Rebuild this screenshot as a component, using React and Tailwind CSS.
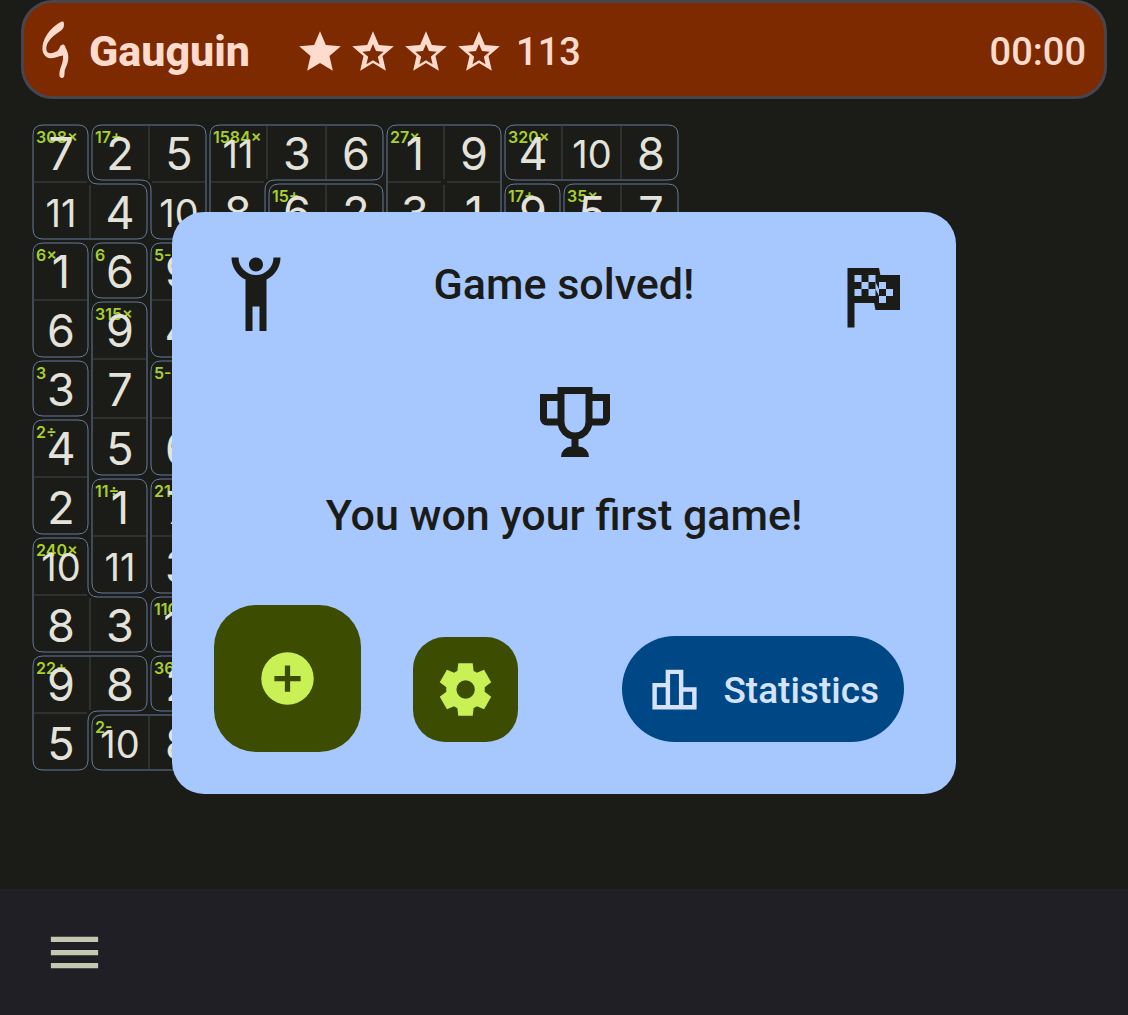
const CELL = 59;
const INSET = 2;
const RADIUS = 10;

const VALUES = [
  [7, 2, 5, 11, 3, 6, 1, 9, 4, 10, 8],
  [11, 4, 10, 8, 6, 2, 3, 1, 9, 5, 7],
  [1, 6, 9],
  [6, 9, 4],
  [3, 7],
  [4, 5, 6],
  [2, 1, 7],
  [10, 11, 3],
  [8, 3, 11],
  [9, 8, 2],
  [5, 10, 8],
];

const CAGES = [
  "ABBCCCDDEEE",
  "AABCFFDDGHH",
  "IJK",
  "ILK",
  "MLN",
  "OLN",
  "OPQ",
  "RPQ",
  "RRS",
  "TTU",
  "TVV",
];

const LABELS = {
  A: "308×", B: "17+", C: "1584×", D: "27×", E: "320×", F: "15+", G: "17+", H: "35×",
  I: "6×", J: "6", K: "5-", L: "315×", M: "3", N: "5-", O: "2÷", P: "11÷",
  Q: "21+", R: "240×", S: "110×", T: "22+", U: "36×", V: "2-",
};

const cageAt = (r, c) => (CAGES[r] && CAGES[r][c]) || "";

function buildLines() {
  const outline = [];
  const inner = [];
  const labelled = {};
  CAGES.forEach((row, r) => {
    [...row].forEach((id, c) => {
      if (!labelled[id]) labelled[id] = `${r}-${c}`;
      const x = c * CELL;
      const y = r * CELL;
      const same = (dr, dc) => cageAt(r + dr, c + dc) === id;
      const lo = INSET;
      const hi = CELL - INSET;
      // distance from the cell edge at which a side's straight run ends
      const gap = (perpendicular, diagonal) => {
        if (!perpendicular) return INSET + RADIUS;
        return diagonal ? RADIUS - INSET : 0;
      };
      [-1, 1].forEach((s) => {
        const edge = s < 0 ? lo : hi;
        if (!same(s, 0)) {
          const a = gap(same(0, -1), same(s, -1));
          const b = CELL - gap(same(0, 1), same(s, 1));
          outline.push(`M${x + a} ${y + edge}H${x + b}`);
        }
        if (!same(0, s)) {
          const a = gap(same(-1, 0), same(-1, s));
          const b = CELL - gap(same(1, 0), same(1, s));
          outline.push(`M${x + edge} ${y + a}V${y + b}`);
        }
        [-1, 1].forEach((t) => {
          const ex = x + (t < 0 ? lo : hi);
          const ey = y + edge;
          if (!same(s, 0) && !same(0, t)) {
            outline.push(`M${ex} ${ey - s * RADIUS}Q${ex} ${ey} ${ex - t * RADIUS} ${ey}`);
          }
          if (same(s, 0) && same(0, t) && !same(s, t)) {
            outline.push(`M${ex} ${ey + s * RADIUS}Q${ex} ${ey} ${ex + t * RADIUS} ${ey}`);
          }
        });
      });
      if (same(0, 1)) inner.push(`M${x + CELL} ${y + 3}V${y + 56}`);
      if (same(1, 0)) inner.push(`M${x + 3} ${y + CELL}H${x + 56}`);
    });
  });
  return { outline: outline.join(""), inner: inner.join(""), labelled };
}

const LINES = buildLines();

function Board() {
  return (
    <div className="relative w-max">
      <svg className="absolute inset-0 h-full w-full" fill="none" aria-hidden="true">
        <path d={LINES.inner} stroke="#43474e" strokeWidth="1" />
        <path d={LINES.outline} stroke="#647b9a" strokeWidth="1" />
      </svg>
      <div className="relative grid grid-cols-[repeat(11,59px)] auto-rows-[59px] font-['Inter',sans-serif]">
        {VALUES.map((row, r) =>
          Array.from({ length: 11 }, (_, c) => {
            const value = row[c];
            const id = cageAt(r, c);
            return (
              <div key={`${r}-${c}`} className="relative flex items-center justify-center pt-0.5 pl-px">
                {LINES.labelled[id] === `${r}-${c}` && (
                  <span className="absolute left-[5px] top-1 text-base leading-5 font-semibold text-[#a8d02c]">
                    {LABELS[id]}
                  </span>
                )}
                <span
                  className={
                    value > 9
                      ? "relative text-[38px] leading-none text-[#e4e3db]"
                      : "relative text-[45px] leading-none text-[#e4e3db]"
                  }
                >
                  {value}
                </span>
              </div>
            );
          })
        )}
      </div>
    </div>
  );
}

function Star({ filled }) {
  return (
    <svg className="size-[50px]" viewBox="0 -960 960 960" fill="currentColor" aria-hidden="true">
      <path
        d={
          filled
            ? "m233-120 65-281L80-590l288-25 112-265 112 265 288 25-218 189 65 281-247-149-247 149Z"
            : "m354-247 126-76 126 77-33-144 111-96-146-13-58-136-58 135-146 13 111 97-33 143ZM233-120l65-281L80-590l288-25 112-265 112 265 288 25-218 189 65 281-247-149-247 149Z"
        }
      />
    </svg>
  );
}

function Icon({ d, className }) {
  return (
    <svg className={className} viewBox="0 0 24 24" fill="currentColor" fillRule="evenodd" aria-hidden="true">
      <path d={d} />
    </svg>
  );
}

const HUMAN =
  "M5,1C5,3.7 6.56,6.16 9,7.32V22H11V15H13V22H15V7.31C17.44,6.16 19,3.7 19,1H17A5,5 0 0,1 12,6A5,5 0 0,1 7,1M12,1C10.89,1 10,1.89 10,3C10,4.11 10.89,5 12,5C13.11,5 14,4.11 14,3C14,1.89 13.11,1 12,1Z";
const FLAG =
  "M14.4,6H20V16H13L12.6,14H7V21H5V4H14L14.4,6M14,14H16V12H18V10H16V8H14V10L13,8V6H11V8H9V6H7V8H9V10H7V12H9V10H11V12H13V10L14,12V14M11,10V8H13V10H11M14,10H16V12H14V10Z";
const TROPHY =
  "M7 2H17V4H22V11A2 2 0 0 1 20 13H16.9A5 5 0 0 1 13 16.9V19A3 3 0 0 1 16 22H8A3 3 0 0 1 11 19V16.9A5 5 0 0 1 7.1 13H4A2 2 0 0 1 2 11V4H7ZM9 4V12A3 3 0 0 0 15 12V4ZM4 6V11H7V6ZM17 6V11H20V6Z";
const PLUS = "M12 2a10 10 0 1 0 0 20a10 10 0 1 0 0-20ZM11 7h2v4h4v2h-4v4h-2v-4H7v-2h4Z";
const CHART =
  "M16,11V3H8v6H2v12h20V11H16z M10,5h4v14h-4V5z M4,11h4v8H4V11z M20,19h-4v-6h4V19z";
const MENU = "M3 18h18v-2H3v2zm0-5h18v-2H3v2zm0-7v2h18V6H3z";
const LOGO =
  "M25 0.5C26.500 0 27 1 27 4C27 7 25 9 22 11C14 16 8 23 9.500 29.500C11 34 16 32 19.500 30.500C23 29 22 24 26 23.500C28 23.500 28 26 29.500 28.500C33 36 31 42 28 48.500C27 51 28.500 56 25.500 57C22 57.500 22 53 23 49C24 45 26.500 41 26 34.500C18 36 12 40 7.500 34C2.500 28 7 15 15 7.500C19 4 22 1.500 25 0.500Z";

export default function App() {
  return (
    <div className="relative flex min-h-screen flex-col bg-[#1b1c17] font-['Roboto',sans-serif]">
      <header className="mx-[21px] flex h-[99px] items-center rounded-[32px] border-3 border-[#49454f] bg-[#7d2a00] pt-0.5 pr-[18px] pl-[13px] text-[#ffdbce]">
        <svg className="mr-4 h-[60px] w-9" viewBox="0 0 36 60" fill="currentColor" aria-hidden="true">
          <path d={LOGO} />
        </svg>
        <h1 className="text-[43px] leading-[52px] font-extrabold">Gauguin</h1>
        <div className="ml-[45px] flex gap-[3px] pt-0.5" role="img" aria-label="Difficulty 1 of 4">
          <Star filled />
          <Star />
          <Star />
          <Star />
        </div>
        <span className="ml-3 pt-0.5 text-[38px] leading-[52px] font-medium">113</span>
        <time className="ml-auto pt-0.5 text-[38px] leading-[52px] font-medium">00:00</time>
      </header>

      <main className="flex-1 pt-6 pl-[31px]">
        <Board />
      </main>

      <nav className="flex h-[126px] items-center bg-[#211f26] px-[43px]">
        <button type="button" aria-label="Menu" className="text-[#c5c8b0]">
          <Icon d={MENU} className="size-[63px]" />
        </button>
      </nav>

      <div className="absolute inset-0 flex items-center justify-center px-[172px] pb-[9px]">
        <section
          role="dialog"
          aria-labelledby="dialog-title"
          className="flex w-full flex-col rounded-[32px] bg-[#a7c7ff] p-[42px] text-[#1b1c18]"
        >
          <div className="flex justify-between">
            <Icon d={HUMAN} className="size-[84px]" />
            <h2 id="dialog-title" className="text-[43px] leading-[60px] font-medium">Game solved!</h2>
            <Icon d={FLAG} className="size-[84px]" />
          </div>
          <Icon d={TROPHY} className="mt-[42px] ml-[21px] size-[84px] self-center" />
          <p className="mt-[21px] text-center text-[43px] leading-[60px] font-medium">You won your first game!</p>
          <div className="mt-[60px] flex items-end pr-[10px]">
            <button type="button" aria-label="New game" className="flex size-[147px] items-center justify-center rounded-[42px] bg-[#3c4c00] text-[#c9f156]">
              <Icon d={PLUS} className="size-[63px]" />
            </button>
            <button type="button" aria-label="Settings" className="mb-[10px] ml-[52px] flex size-[105px] items-center justify-center rounded-[32px] bg-[#3c4c00] text-[#c9f156]">
              <svg className="size-[63px]" viewBox="0 -960 960 960" fill="currentColor" aria-hidden="true">
                <path d="m370-80-14-118q-13-5-26-13T307-225l-110 45L88-368l100-78q-1-7-1-13.5v-41q0-6.500 1-13.500L88-592l109-188 110 45q11-8 25-16t24-11l14-118h220l14 118q13 5 26 13t23 14l110-45 109 188-100 78q1 7 1 13.500v41q0 6.500-1 13.500l100 78-109 188-110-45q-11 8-25 16t-24 11L590-80H370Zm112-260q58 0 99-41t41-99q0-58-41-99t-99-41q-59 0-99.500 41T342-480q0 58 40.500 99t99.500 41Z" />
              </svg>
            </button>
            <button type="button" className="mb-[10px] ml-auto flex h-[106px] items-center rounded-full bg-[#004785] pr-[25px] pl-[26px] text-[37px] leading-[52px] font-medium text-[#d6e3ff]">
              <Icon d={CHART} className="mr-[22px] size-[53px]" />
              <span className="pt-1">Statistics</span>
            </button>
          </div>
        </section>
      </div>
    </div>
  );
}
